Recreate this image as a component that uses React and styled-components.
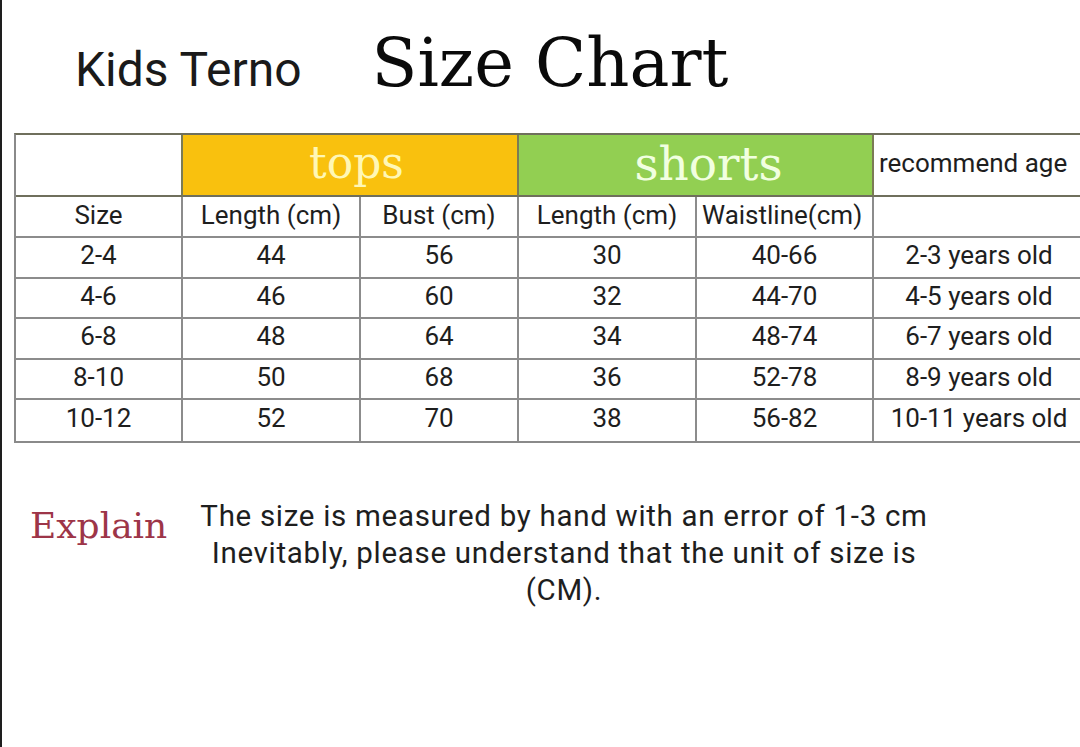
import React from "react";
import styled, { createGlobalStyle } from "styled-components";

const Global = createGlobalStyle`
  html, body { margin: 0; padding: 0; background: #fff; }
  body { overflow: hidden; }
  #root { width: 1080px; height: 747px; }
`;

const Page = styled.div`
  width: 1080px;
  height: 747px;
  box-sizing: border-box;
  border-left: 2px solid #1e1e1e;
  background: #fff;
  overflow: hidden;
  color: #1c1c1c;
  font-family: Roboto, "Noto Sans", sans-serif;
`;

const Header = styled.header`
  height: 133px;
  box-sizing: border-box;
  padding: 30px 0 0 73px;
  display: flex;
  align-items: baseline;
  gap: 70px;
`;

const Brand = styled.h2`
  margin: 0;
  font-family: Roboto, sans-serif;
  font-weight: 400;
  font-size: 48px;
  line-height: 1;
  color: #1a1a1a;
`;

const Title = styled.h1`
  margin: 0;
  font-family: "DejaVu Serif", serif;
  font-weight: 400;
  font-size: 67px;
  line-height: 1;
  color: #0a0a0a;
`;

const Grid = styled.div`
  margin-left: 12px;
  display: grid;
  grid-template-columns: 167px 178px 158px 178px 177px 212px;
  grid-template-rows: 62px 41px repeat(5, 40.5px);
  border-top: 2px solid #6f6f5c;
  border-left: 2px solid #8a8a8a;
  border-bottom: 2px solid #8a8a8a;
  width: max-content;
`;

const Cell = styled.div`
  box-sizing: border-box;
  border-right: 2px solid ${(p) => (p.$band ? "#7b7b55" : "#8c8c8c")};
  border-bottom: 2px solid ${(p) => (p.$band ? "#6f6f5c" : "#8c8c8c")};
  grid-column: ${(p) => (p.$span ? `span ${p.$span}` : "auto")};
  background: ${(p) => p.$bg || "#fff"};
  display: flex;
  align-items: center;
  justify-content: ${(p) => (p.$left ? "flex-start" : "center")};
  padding-left: ${(p) => (p.$left ? "5px" : "0")};
  padding-bottom: 4px;
  font-size: 26px;
  color: #1e1e1e;
  white-space: nowrap;
  &:nth-last-child(-n + 6) {
    border-bottom: none;
  }
`;

const Band = styled.span`
  font-family: "DejaVu Serif", serif;
  font-size: ${(p) => p.$size}px;
  color: ${(p) => p.$color};
  line-height: 1;
  margin-left: ${(p) => p.$shift}px;
`;

const Note = styled.section`
  display: flex;
  align-items: flex-start;
  padding: 55px 0 0 28px;
`;

const NoteLabel = styled.div`
  font-family: "DejaVu Serif", serif;
  font-size: 36px;
  color: #9d3548;
  margin-top: 7px;
  width: 164px;
`;

const NoteText = styled.p`
  margin: 0;
  width: 740px;
  text-align: center;
  font-family: Roboto, sans-serif;
  font-size: 29.5px;
  line-height: 37px;
  letter-spacing: 0.7px;
  color: #1e1e1e;
`;

const Line = styled.span`
  display: block;
`;

const rows = [
  ["2-4", "44", "56", "30", "40-66", "2-3 years old"],
  ["4-6", "46", "60", "32", "44-70", "4-5 years old"],
  ["6-8", "48", "64", "34", "48-74", "6-7 years old"],
  ["8-10", "50", "68", "36", "52-78", "8-9 years old"],
  ["10-12", "52", "70", "38", "56-82", "10-11 years old"],
];

export default function App() {
  return (
    <Page>
      <Global />
      <Header>
        <Brand>Kids Terno</Brand>
        <Title>Size Chart</Title>
      </Header>
      <Grid>
        <Cell $band />
        <Cell $band $span={2} $bg="#F9C10E">
          <Band $size={44} $shift={13} $color="#FFF7B5">tops</Band>
        </Cell>
        <Cell $band $span={2} $bg="#92CF52">
          <Band $size={47} $shift={26} $color="#F1FFE0">shorts</Band>
        </Cell>
        <Cell $band $left>recommend age</Cell>

        <Cell>Size</Cell>
        <Cell>Length (cm)</Cell>
        <Cell>Bust (cm)</Cell>
        <Cell>Length (cm)</Cell>
        <Cell $left>Waistline(cm)</Cell>
        <Cell />

        {rows.map((r) =>
          r.map((v, i) => <Cell key={r[0] + i}>{v}</Cell>)
        )}
      </Grid>
      <Note>
        <NoteLabel>Explain</NoteLabel>
        <NoteText>
          <Line>The size is measured by hand with an error of 1-3 cm</Line>
          <Line>Inevitably, please understand that the unit of size is</Line>
          <Line>(CM).</Line>
        </NoteText>
      </Note>
    </Page>
  );
}
